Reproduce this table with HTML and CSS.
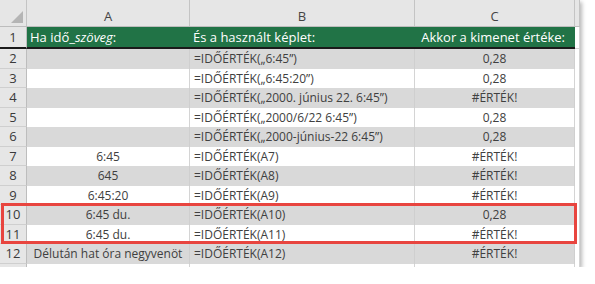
FILE: index.html
```html
<!DOCTYPE html>
<html lang="hu">
<head>
<meta charset="utf-8">
<link rel="stylesheet" href="styles.css">
</head>
<body>
<div class="sheet">
  <div class="row colhead">
    <div class="corner"><span class="tri"></span></div>
    <div class="ch">A</div>
    <div class="ch">B</div>
    <div class="ch">C</div>
    <div class="ch"></div>
  </div>
  <div class="row title">
    <div class="rh">1</div>
    <div class="c"><span>Ha idő_<i>szöveg</i>:</span></div>
    <div class="c">És a használt képlet:</div>
    <div class="c right">Akkor a kimenet értéke:</div>
    <div class="c d"></div>
  </div>
  <div class="row even"><div class="rh">2</div><div class="c ctr"></div><div class="c">=IDŐÉRTÉK(„6:45”)</div><div class="c ctr">0,28</div><div class="c d"></div></div>
  <div class="row odd"><div class="rh">3</div><div class="c ctr"></div><div class="c">=IDŐÉRTÉK(„6:45:20”)</div><div class="c ctr">0,28</div><div class="c d"></div></div>
  <div class="row even"><div class="rh">4</div><div class="c ctr"></div><div class="c">=IDŐÉRTÉK(„2000. június 22. 6:45”)</div><div class="c ctr">#ÉRTÉK!</div><div class="c d"></div></div>
  <div class="row odd"><div class="rh">5</div><div class="c ctr"></div><div class="c">=IDŐÉRTÉK(„2000/6/22 6:45”)</div><div class="c ctr">0,28</div><div class="c d"></div></div>
  <div class="row even"><div class="rh">6</div><div class="c ctr"></div><div class="c">=IDŐÉRTÉK(„2000-június-22 6:45”)</div><div class="c ctr">0,28</div><div class="c d"></div></div>
  <div class="row odd"><div class="rh">7</div><div class="c ctr">6:45</div><div class="c">=IDŐÉRTÉK(A7)</div><div class="c ctr">#ÉRTÉK!</div><div class="c d"></div></div>
  <div class="row even"><div class="rh">8</div><div class="c ctr">645</div><div class="c">=IDŐÉRTÉK(A8)</div><div class="c ctr">#ÉRTÉK!</div><div class="c d"></div></div>
  <div class="row odd"><div class="rh">9</div><div class="c ctr">6:45:20</div><div class="c">=IDŐÉRTÉK(A9)</div><div class="c ctr">#ÉRTÉK!</div><div class="c d"></div></div>
  <div class="highlight-wrap">
    <div class="row even"><div class="rh">10</div><div class="c ctr">6:45 du.</div><div class="c">=IDŐÉRTÉK(A10)</div><div class="c ctr">0,28</div><div class="c d"></div></div>
    <div class="row odd"><div class="rh">11</div><div class="c ctr">6:45 du.</div><div class="c">=IDŐÉRTÉK(A11)</div><div class="c ctr">#ÉRTÉK!</div><div class="c d"></div></div>
    <div class="redbox"></div>
  </div>
  <div class="row even"><div class="rh">12</div><div class="c ctr">Délután hat óra negyvenöt</div><div class="c">=IDŐÉRTÉK(A12)</div><div class="c ctr">#ÉRTÉK!</div><div class="c d"></div></div>
  <div class="row stub"><div class="rh"></div><div class="c"></div><div class="c"></div><div class="c"></div><div class="c d"></div></div>
</div>
</body>
</html>
```
FILE: styles.css
```css
* { box-sizing: border-box; }
html, body { margin: 0; padding: 0; background: #fff; }
body {
  font-family: "Open Sans", "Noto Sans", sans-serif;
  font-size: 12px;
  color: #404040;
}
.sheet {
  width: 580px;
  box-shadow: 2px 2px 4px rgba(0,0,0,0.28);
}
.row {
  display: grid;
  grid-template-columns: 27px 163px 225px 160px 5px;
  height: 19.5px;
}
.row > div {
  display: flex;
  align-items: center;
  overflow: hidden;
  white-space: nowrap;
  border-right: 1px solid #d4d4d4;
}
.colhead { height: 27px; background: #e6e6e6; border-bottom: 1px solid #bdbdbd; }
.colhead > div { border-right: 1px solid #c4c4c4; }
.ch {
  justify-content: center;
  padding-top: 5px;
  font-size: 13px;
  color: #444;
}
.corner { position: relative; }
.tri {
  position: absolute;
  right: 3px;
  bottom: 3px;
  width: 0; height: 0;
  border-left: 12px solid transparent;
  border-bottom: 12px solid #b5b5b5;
}
.rh {
  justify-content: center;
  background: #e6e6e6;
  border-right: 1px solid #bdbdbd !important;
  border-bottom: 1px solid #cfcfcf;
  font-size: 13px;
  color: #3a3a3a;
}
.title { height: 22px; }
.title > .c {
  background: #217346;
  color: #fff;
  font-size: 13px;
  border-right: none;
  border-bottom: 2px solid #1a1a1a;
  padding-left: 3px;
}
.title > .rh { border-bottom: 2px solid #1a1a1a; }
.title > .right { justify-content: flex-end; padding-right: 10px; }
.title > .d { background: #fff; border-bottom: 1px solid #d4d4d4; border-right: 1px solid #d4d4d4; }
.c { padding-left: 4px; }
.ctr { justify-content: center; padding-left: 0; }
.even > .c { background: #d9d9d9; border-right-color: #cfcfcf; }
.odd > .c { background: #fff; }
.row > .d { background: #fff !important; border-right: 1px solid #d4d4d4; }
.stub { height: 3px; }
.stub > .rh { border-bottom: none; }
.highlight-wrap { position: relative; }
.redbox {
  position: absolute;
  left: 1px;
  top: -2px;
  width: 576px;
  height: 41px;
  border: 3px solid #e8453f;
  pointer-events: none;
}
```
